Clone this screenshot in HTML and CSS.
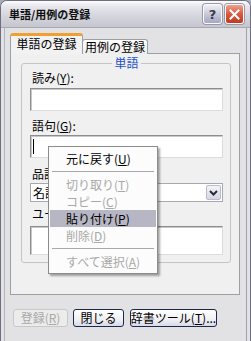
FILE: index.html
```html
<!DOCTYPE html>
<html lang="ja">
<head>
<meta charset="utf-8">
<title>単語/用例の登録</title>
<link rel="stylesheet" href="styles.css">
</head>
<body>
<div class="window">
  <div class="titlebar">
    <span class="title">単語/用例の登録</span>
    <span class="tb-btn help">?</span>
    <span class="tb-btn close">
      <svg width="11" height="11" viewBox="0 0 11 11"><path d="M1.5 1.5 L9.5 9.5 M9.5 1.5 L1.5 9.5" stroke="#fff" stroke-width="2" stroke-linecap="square"/></svg>
    </span>
  </div>
  <div class="client">
    <div class="tabs">
      <div class="tab active">単語の登録</div>
      <div class="tab">用例の登録</div>
    </div>
    <div class="panel">
      <fieldset class="group">
        <legend>単語</legend>
        <div class="label l1">読み(<u>Y</u>):</div>
        <div class="input"></div>
        <div class="label l2">語句(<u>G</u>):</div>
        <div class="input"><span class="caret"></span></div>
        <div class="label l3">品詞(<u>H</u>):</div>
        <div class="combo"><span class="combo-text">名詞</span><span class="drop"><svg width="9" height="6" viewBox="0 0 9 6"><path d="M1 1 L4.5 4.5 L8 1" fill="none" stroke="#2a2a3a" stroke-width="2"/></svg></span></div>
        <div class="label l4">ユーザー(<u>C</u>):</div>
        <div class="input area"></div>
      </fieldset>
    </div>
    <div class="buttons">
      <span class="btn disabled b1">登録(<u>R</u>)</span>
      <span class="btn b2">閉じる</span>
      <span class="btn b3">辞書ツール(<u>T</u>)...</span>
    </div>
  </div>
  <div class="menu">
    <div class="item">元に戻す(<u>U</u>)</div>
    <div class="sep"></div>
    <div class="item dis">切り取り(<u>T</u>)</div>
    <div class="item dis">コピー(<u>C</u>)</div>
    <div class="item hi">貼り付け(<u>P</u>)</div>
    <div class="item dis">削除(<u>D</u>)</div>
    <div class="sep"></div>
    <div class="item dis">すべて選択(<u>A</u>)</div>
  </div>
</div>
</body>
</html>
```
FILE: styles.css
```css
* { box-sizing: border-box; }
body {
  margin: 0;
  background: #a8aeb8;
  font-family: "Noto Sans CJK JP", sans-serif;
  font-size: 12px;
  color: #000;
  overflow: hidden;
}
.window {
  width: 251px;
  height: 341px;
  background: #e2e2e4;
  border: 1px solid #6e6e80;
  border-bottom: none;
  border-radius: 7px 7px 0 0;
  position: relative;
  display: flex;
  flex-direction: column;
  overflow: hidden;
}
.titlebar {
  height: 27px;
  flex: none;
  display: flex;
  align-items: center;
  padding: 0 6px 0 8px;
  background: linear-gradient(#fdfdfe, #e6e6ec 20%, #d4d4dc 60%, #c6c6d0);
  border-bottom: 1px solid #a8a8b4;
}
.title {
  flex: 1;
  font-weight: bold;
  font-size: 11px;
  line-height: 12px;
  color: #101010;
}
.tb-btn {
  width: 19px;
  height: 20px;
  border-radius: 3px;
  border: 1px solid #fafafa;
  display: flex;
  align-items: center;
  justify-content: center;
  margin-left: 2px;
  box-shadow: 0 0 0 1px #9a9aa8;
}
.help {
  background: linear-gradient(#f0f0f6, #c4c6d6 55%, #a4a8c0);
  color: #3a3a4a;
  font-family: "DejaVu Sans", sans-serif;
  font-weight: bold;
  font-size: 13px;
}
.close {
  background: linear-gradient(#f0a090, #d85a40 50%, #c03a22);
  margin-left: 3px;
}
.client {
  flex: 1;
  display: flex;
  flex-direction: column;
  margin: 0 3px;
  border-left: 1px solid #b4b4bc;
  border-right: 1px solid #a0a0aa;
  padding: 5px 6px 0 5px;
}
.tabs {
  display: flex;
  align-items: flex-end;
  height: 21px;
  margin-bottom: -1px;
  position: relative;
  z-index: 1;
}
.tab {
  height: 15px;
  width: 66px;
  border: 1px solid #9aa0a4;
  border-bottom: none;
  border-radius: 3px 3px 0 0;
  background: linear-gradient(#ffffff, #ececec);
  text-align: center;
  line-height: 14px;
  margin-left: -1px;
}
.tab.active {
  height: 21px;
  width: 73px;
  margin-left: 0;
  background: #f2f2f2;
  border-top: 3px solid #f0a030;
  line-height: 16px;
  position: relative;
  z-index: 2;
}
.panel {
  height: 242px;
  border: 1px solid #9aa0a4;
  background: #f0f0f0;
  padding: 3px 8px 0 10px;
}
.group {
  margin: 0;
  padding: 0 7px 7px 8px;
  border: 1px solid #c4c4c4;
  border-radius: 3px;
  min-width: 0;
}
.group legend {
  margin: 0 auto;
  padding: 0 2px;
  color: #1f50c8;
  line-height: 12px;
}
.label {
  height: 14px;
  line-height: 14px;
  padding-left: 2px;
  white-space: nowrap;
}
.l1 { margin-top: 2px; margin-bottom: 3px; }
.l2 { margin-top: 8px; margin-bottom: 2px; }
.l3 { margin-top: 9px; margin-bottom: 2px; }
.l4 { margin-top: 5px; margin-bottom: 5px; }
.input {
  height: 23px;
  background: #fff;
  border: 1px solid #8c8c94;
  border-color: #8c8c94 #dcdcdc #dcdcdc #8c8c94;
  box-shadow: inset 1px 1px 0 #c8c8c8;
  position: relative;
}
.input.area { height: 29px; }
.caret {
  position: absolute;
  left: 2px;
  top: 3px;
  width: 1px;
  height: 15px;
  background: #000;
}
.combo {
  height: 19px;
  background: #fff;
  border: 1px solid #a8a8b0;
  display: flex;
  align-items: center;
  justify-content: space-between;
  padding: 0 1px 0 2px;
}
.combo-text { line-height: 14px; }
.drop {
  width: 15px;
  height: 15px;
  border: 1px solid #b8bccc;
  border-radius: 2px;
  background: linear-gradient(#f4f4f8, #d4d6e2);
  display: flex;
  align-items: center;
  justify-content: center;
}
.buttons {
  display: flex;
  margin-top: 14px;
  margin-left: 3px;
}
.btn {
  height: 18px;
  border: 1px solid #1c2850;
  border-radius: 3px;
  background: linear-gradient(#ffffff, #f0f0f4 60%, #d8dae6);
  display: flex;
  align-items: center;
  justify-content: center;
  line-height: 14px;
  white-space: nowrap;
}
.b1 { width: 55px; }
.b2 { width: 51px; margin-left: 5px; }
.b3 { width: 87px; margin-left: 6px; }
.btn.disabled {
  border-color: #c8c8c8;
  background: #ececec;
  color: #a8a8a8;
}
.menu {
  position: absolute;
  left: 47px;
  top: 145px;
  width: 110px;
  background: #fcfcfc;
  border: 1px solid #8c8c8c;
  padding: 3px 1px;
  box-shadow: 2px 2px 2px rgba(0, 0, 0, 0.35);
  z-index: 5;
}
.item {
  height: 17px;
  line-height: 17px;
  padding-left: 16px;
  white-space: nowrap;
}
.item.dis { color: #a8a8a8; }
.item.hi { background: #b6b6c4; }
.sep {
  height: 9px;
  margin: 0 2px;
  position: relative;
}
.sep::after {
  content: "";
  position: absolute;
  left: 0;
  right: 0;
  top: 4px;
  border-top: 1px solid #a8a8a8;
}
```
